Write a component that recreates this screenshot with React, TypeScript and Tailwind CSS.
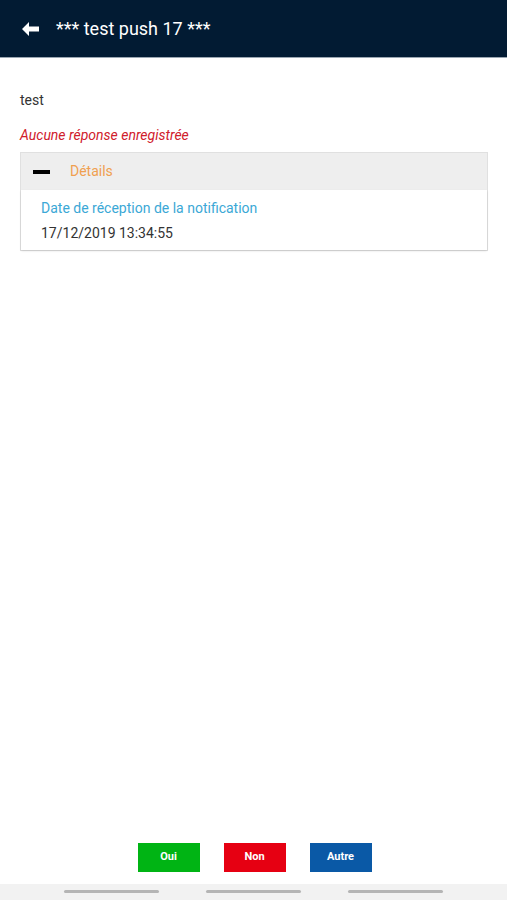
export default function App() {
  return (
    <div className="flex flex-col h-[900px] w-[507px] bg-white overflow-hidden" style={{ fontFamily: 'Roboto, "Liberation Sans", sans-serif' }}>
      <header className="h-[58px] shrink-0 bg-[#021b33] border-b-[1.5px] border-[#9aa6b2] flex items-center pl-[22px]">
        <svg width="17" height="14" viewBox="0 0 17 14" className="shrink-0">
          <path d="M7 0 L0 7 L7 14 L7 9.5 L17 9.5 L17 4.5 L7 4.5 Z" fill="#ffffff" />
        </svg>
        <span className="ml-[17px] text-white text-[18px] leading-none">*** test push 17 ***</span>
      </header>

      <main className="flex-1 px-5 pt-[35px]">
        <p className="text-[14px] text-[#333] leading-none">test</p>
        <p className="mt-[21px] text-[14px] italic text-[#d0202c] leading-none">Aucune réponse enregistrée</p>
        <div className="mt-[10px] w-[468px] border border-[#e0e0e0]">
          <div className="h-[37px] bg-[#eeeeee] flex items-center pl-[12px]">
            <span className="block w-[17px] h-[4px] bg-black" />
            <span className="ml-[20px] text-[14px] text-[#f0a050]">Détails</span>
          </div>
          <div className="h-[60px] bg-white pl-[20px] pt-[8px] shadow-[0_1px_2px_rgba(0,0,0,0.12)]">
            <p className="text-[14px] text-[#3ba8d6] leading-5">Date de réception de la notification</p>
            <p className="mt-[5px] text-[14px] text-[#333] leading-5">17/12/2019 13:34:55</p>
          </div>
        </div>
      </main>

      <div className="flex justify-center gap-6 pb-[12px] pl-[2px]">
        <button className="w-[62px] h-[29px] bg-[#00b414] text-white text-[11px] font-bold">Oui</button>
        <button className="w-[62px] h-[29px] bg-[#e60012] text-white text-[11px] font-bold">Non</button>
        <button className="w-[62px] h-[29px] bg-[#0a59a6] text-white text-[11px] font-bold">Autre</button>
      </div>

      <div className="h-[16px] shrink-0 bg-[#f2f2f2] flex justify-center gap-[47px] pt-[6px]">
        <span className="block w-[95px] h-[3px] bg-[#b5b5b5] rounded-full" />
        <span className="block w-[95px] h-[3px] bg-[#b5b5b5] rounded-full" />
        <span className="block w-[95px] h-[3px] bg-[#b5b5b5] rounded-full" />
      </div>
    </div>
  );
}
